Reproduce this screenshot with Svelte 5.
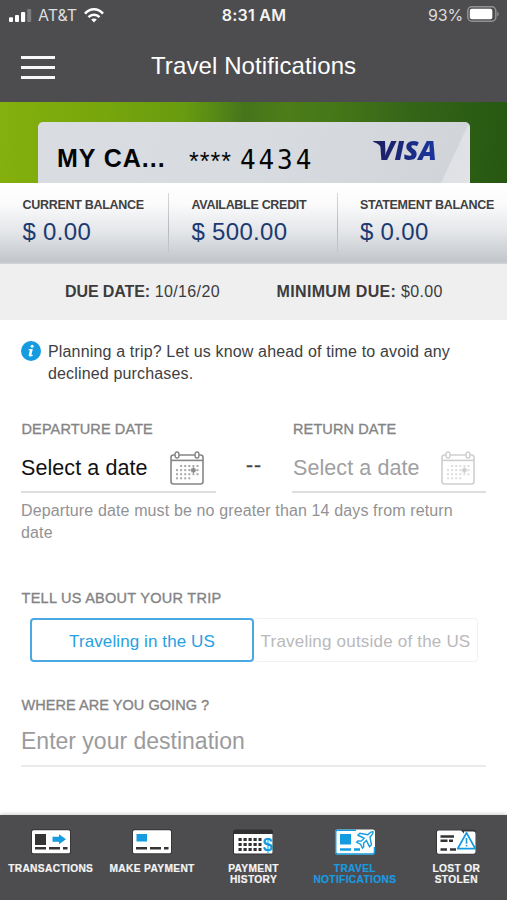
<script>
  const balances = [
    { label: 'CURRENT BALANCE', value: '$ 0.00' },
    { label: 'AVAILABLE CREDIT', value: '$ 500.00' },
    { label: 'STATEMENT BALANCE', value: '$ 0.00' }
  ];
  const tabs = [
    { id: 'transactions', lines: ['TRANSACTIONS'] },
    { id: 'pay', lines: ['MAKE PAYMENT'] },
    { id: 'history', lines: ['PAYMENT', 'HISTORY'] },
    { id: 'travel', lines: ['TRAVEL', 'NOTIFICATIONS'], active: true },
    { id: 'lost', lines: ['LOST OR', 'STOLEN'] }
  ];
  const dots = [];
  for (let r = 0; r < 4; r++)
    for (let c = 0; c < 6; c++)
      if (!(r === 0 && c < 1) && !(r === 3 && c > 3)) dots.push([6 + c * 4.1, 14 + r * 4.1]);
</script>

{#snippet calendar()}
  <svg class="cal" width="34" height="34" viewBox="0 0 34 34" fill="none" stroke="currentColor">
    <rect x="1" y="4" width="32" height="29" rx="2.5" stroke-width="1.6" />
    <path d="M1 9.4H33" stroke-width="1.6" />
    <rect x="5.1" y="1" width="3.8" height="6" rx="1.9" fill="#fff" stroke-width="1.4" />
    <rect x="25.1" y="1" width="3.8" height="6" rx="1.9" fill="#fff" stroke-width="1.4" />
    {#each dots as [x, y]}
      <rect {x} {y} width="2" height="2" fill="currentColor" stroke="none" opacity=".7" />
    {/each}
    <path d="M23.4 16.3v5.800M20.500 19.200h5.800M21.900 17.700h3v3h-3z" stroke-width="1.100" />
  </svg>
{/snippet}

<div class="app">
  <div class="status">
    <div class="side">
      <svg width="23" height="13" viewBox="0 0 23 13" fill="#fff">
        <rect x="0" y="8.2" width="4" height="4.8" rx="1" />
        <rect x="6" y="6" width="4" height="7" rx="1" />
        <rect x="12" y="3" width="4.2" height="10" rx="1" />
        <rect x="18.2" y="0" width="4" height="13" rx="1" opacity=".27" />
      </svg>
      <span class="carrier">AT&amp;T</span>
      <svg class="wifi" width="20" height="15" viewBox="0 0 20 15" fill="none" stroke="#fff" stroke-width="2.5">
        <path d="M1 5.6C6-.1 14-.1 19 5.6" />
        <path d="M4.5 9.2c3-3.3 8-3.3 11 0" />
        <path d="M10 14.5 7.2 11.6c1.5-1.5 4.1-1.5 5.6 0z" fill="#fff" stroke="none" />
      </svg>
    </div>
    <div class="clock">8:31 AM</div>
    <div class="side right">
      <span class="pct">93%</span>
      <svg width="32" height="16" viewBox="0 0 32 16">
        <rect x=".8" y=".8" width="28" height="14.4" rx="4" fill="none" stroke="#929294" stroke-width="1.5" />
        <rect x="2.8" y="2.8" width="22.5" height="10.4" rx="2" fill="#fff" />
        <path d="M30.3 5.5c1.8.8 1.8 4.2 0 5z" fill="#929294" />
      </svg>
    </div>
  </div>

  <header>
    <div class="burger"><i></i><i></i><i></i></div>
    <h1>Travel Notifications</h1>
  </header>

  <section class="band">
    <div class="card">
      <b>MY CA...</b>
      <span class="stars">****</span>
      <span class="digits">4434</span>
      <div class="logo">
        <svg width="9" height="8" viewBox="0 0 9 8"><path d="M.3 0H6.500Q8.500 0 9 2V8Q6.500 2.500.3 1z" fill="#1d2069" /></svg>
        <span class="visa">VISA</span>
      </div>
    </div>
  </section>

  <section class="balances">
    {#each balances as b}
      <div class="bal">
        <div class="cap">{b.label}</div>
        <div class="amt">{b.value}</div>
      </div>
    {/each}
  </section>

  <section class="due">
    <div><b>DUE DATE:</b> 10/16/20</div>
    <div class="min"><b>MINIMUM DUE:</b> $0.00</div>
  </section>

  <main>
    <div class="info">
      <svg width="20" height="20" viewBox="0 0 20 20">
        <circle cx="10" cy="10" r="10" fill="#149be0" />
        <circle cx="11.1" cy="5.3" r="1.5" fill="#fff" />
        <path d="M7.8 8h4l-1.3 5.5c-.1.6.3.7 1.3.2v1.1c-2.5 1.3-4.5.8-4-1.3L8.900 9.200H7.600z" fill="#fff" />
      </svg>
      <p>Planning a trip? Let us know ahead of time to avoid any<br />declined purchases.</p>
    </div>

    <div class="dates">
      <div class="field">
        <div class="label">DEPARTURE DATE</div>
        <div class="pick"><span>Select a date</span>{@render calendar()}</div>
      </div>
      <div class="dash">--</div>
      <div class="field off">
        <div class="label">RETURN DATE</div>
        <div class="pick"><span>Select a date</span>{@render calendar()}</div>
      </div>
    </div>
    <p class="hint">Departure date must be no greater than 14 days from return<br />date</p>

    <div class="label tell">TELL US ABOUT YOUR TRIP</div>
    <div class="seg">
      <div class="opt on">Traveling in the US</div>
      <div class="opt two">Traveling outside of the US</div>
    </div>

    <div class="label where">WHERE ARE YOU GOING ?</div>
    <div class="dest">Enter your destination</div>
  </main>

  <nav>
    {#each tabs as t}
      <div class="tab" class:active={t.active}>
        <svg width="42" height="26" viewBox="0 0 42 26">
          {#if t.id === 'transactions' || t.id === 'pay'}
            <rect x="1" y=".3" width="40" height="25" rx="2.500" fill="#363638" />
            <rect x="2" y="1.300" width="38" height="23" rx="1.500" fill="#fff" />
            {#if t.id === 'transactions'}
              <rect x="5" y="5" width="11" height="11" fill="#343435" />
              <path d="M22.500 7.700h6.500V5.300l7 5-7 5v-2.600h-6.500z" fill="#149be0" />
            {:else}
              <rect x="5.500" y="5" width="10.500" height="7.500" fill="#149be0" />
            {/if}
            <path d="M5 19.300H16M19 19.300H30M33 19.300h4.500" stroke="#343435" stroke-width="2.600" />
          {:else if t.id === 'history'}
            <rect x="1" y=".5" width="40" height="25" rx="2.500" fill="#303032" />
            <path d="M2 5H40.500v18.500q0 1-1 1H3q-1 0-1-1z" fill="#fff" />
            <path d="M6.500 10.500h23M6.500 15.500h23M6.500 20.500h23" stroke="#303032" stroke-width="3.200" stroke-dasharray="3.200 1.800" />
            <text x="35.700" y="21.500" text-anchor="middle" class="dollar">$</text>
          {:else if t.id === 'travel'}
            <rect x="1" y=".500" width="40" height="25" rx="2.500" fill="#fff" />
            <path d="M22 1.200H3.500Q1.700 1.200 1.700 3V23Q1.700 24.900 3.500 24.900H38.500Q40.500 24.900 40.500 23V18" fill="none" stroke="#149be0" stroke-width="1.500" />
            <path d="M6 5H17V15.500H6z" fill="#149be0" />
            <path d="M6 20.500h11M20 20.500h6" stroke="#149be0" stroke-width="2.400" />
            <g transform="translate(32.300 9.400) rotate(45) scale(.91)">
              <path d="M0-10.500C1.500-9.500 1.700-8 1.700-4L9 1V4L1.700 1.500V6L4.500 8.500V10.500L0 9-4.500 10.500V8.500L-1.700 6V1.500L-9 4V1L-1.700-4C-1.700-8-1.500-9.500 0-10.500Z" fill="#fff" stroke="#149be0" stroke-width="1.500" />
            </g>
          {:else}
            <rect x="1" y=".800" width="40" height="24.500" rx="2.500" fill="#363638" />
            <path d="M3.500 1.500H26L29 4.500V2.500H38.500Q40.500 2.500 40.500 4.500V23Q40.500 24.800 38.500 24.800H3.500Q2 24.800 2 23V3Q2 1.500 3.500 1.500z" fill="#fff" />
            <path d="M5.500 7.500H19M5.500 11.800h7M14 11.800h4M5.500 20.500h6.500M15 20.500h6" stroke="#343435" stroke-width="2.600" />
            <path d="M31.500 3.900 40.300 19.600H22.700Z" fill="#fff" stroke="#149be0" stroke-width="1.800" stroke-linejoin="round" />
            <path d="M31.500 9v5.700M31.500 15.900v1.700" stroke="#149be0" stroke-width="1.600" />
          {/if}
        </svg>
        <div class="names">
          {#each t.lines as l}<div>{l}</div>{/each}
        </div>
      </div>
    {/each}
  </nav>
</div>

<style>
  :global(body) { margin: 0; background: #fff; }
  .app {
    width: 507px; height: 900px; overflow: hidden;
    display: flex; flex-direction: column;
    font-family: "Liberation Sans", Arial, sans-serif; background: #fff;
    white-space: nowrap; color: #333;
  }
  * { box-sizing: border-box; }
  h1, p { margin: 0; font-weight: 400; }
  .status {
    height: 30px; flex: none; background: #4d4d4f; color: #f4f4f4;
    display: grid; grid-template-columns: 1fr auto 1fr; align-items: center;
    padding: 0 8px 0 9px; font-family: Inter, sans-serif;
  }
  .side { display: flex; align-items: center; height: 30px; }
  .right { justify-content: flex-end; }
  .right svg { margin-top: -2px; }
  .carrier { font-size: 16px; margin-left: 6px; letter-spacing: 0; color: #dedede; }
  .wifi { margin-left: 7px; }
  .clock { font-size: 16px; font-weight: 600; letter-spacing: .25px; }
  .pct { font-size: 16px; letter-spacing: -.2px; margin-right: 4px; color: #dedede; }
  header {
    height: 72px; flex: none; background: #4d4d4f; color: #fff;
    display: flex; align-items: center; padding: 1px 0 0 21px;
  }
  .burger { width: 34px; display: flex; flex-direction: column; gap: 7px; margin-top: 2px; }
  .burger i { height: 3px; background: #f7f7f7; }
  h1 { font-size: 24px; line-height: 30px; margin: 0 0 1px 96px; letter-spacing: .1px; }
  .band {
    height: 81px; flex: none; padding: 20px 37px 0 38px;
    background: linear-gradient(93deg, #85b00d 0, #77a60c 20%, #689b10 36%, #578a15 42%, #46741c 48%, #4d7c18 56%, #457718 66%, #356518 80%, #265812 100%);
  }
  .card {
    height: 61px; border-radius: 5px 5px 0 0; color: #050505;
    background: linear-gradient(115deg, #d9dce0 0, #d8dbdf 50%, #d1d5d9 93.500%, #dfe1e5 93.900%, #e1e3e6 100%);
    display: flex; align-items: center; padding: 11px 0 0 19px;
  }
  .card b { font-size: 25px; letter-spacing: .95px; width: 132px; }
  .stars { font-size: 25px; letter-spacing: 1px; width: 51px; padding-top: 6px; }
  .digits { font-family: "DejaVu Sans Mono", monospace; font-size: 26px; letter-spacing: 2.900px; width: 133px; padding-top: 4px; }
  .logo { display: flex; align-items: flex-start; margin-top: -16px; }
  .logo svg { margin: 5px -4px 0 0; }
  .visa {
    font: italic 800 27px/28px "Open Sans", sans-serif; letter-spacing: -.2px; padding-right: 3px;
    background: linear-gradient(90deg, #1c1f66, #1a37a0); -webkit-background-clip: text; background-clip: text; color: transparent;
  }
  .balances {
    height: 81px; flex: none; display: grid; grid-template-columns: 169px 168.500px 1fr;
    background: linear-gradient(#fff 0, #fbfbfc 25%, #e4e6e9 60%, #c2c6ca 97%, #d4d6d8 100%);
  }
  .bal { padding: 15px 0 0 22.500px; position: relative; }
  .bal + .bal::before {
    content: ""; position: absolute; left: -1px; top: 10px; width: 1px; height: 59px;
    background: linear-gradient(#d7d9db, #b8bbbe 60%, #c3c7ca);
  }
  .cap { font-size: 12.500px; line-height: 15px; font-weight: 700; color: #404042; letter-spacing: -.3px; }
  .amt { font-size: 24px; line-height: 28px; margin-top: 5px; color: #1b3a72; letter-spacing: .3px; }
  .due {
    height: 56px; flex: none; background: #efefef; display: flex; align-items: center;
    padding-left: 65px; font-size: 16px; color: #3c3c3e; letter-spacing: .35px;
  }
  .due b { letter-spacing: -.1px; }
  .due .min b { letter-spacing: .35px; }
  .due div:first-child { width: 211.500px; }
  main { flex: 1; padding: 21px 21px 0; }
  .info { display: flex; color: #404042; }
  .info svg { flex: none; }
  .info p { font-size: 16px; line-height: 22px; margin-left: 7px; letter-spacing: .16px; }
  .dates { display: flex; margin-top: 33px; height: 75px; }
  .field { width: 195px; border-bottom: 2px solid #dedede; }
  .off { width: 194px; }
  .label { font-size: 14.500px; line-height: 22px; padding-left: .5px; color: #848486; -webkit-text-stroke: .35px currentColor; letter-spacing: .12px; }
  .pick { display: flex; align-items: center; height: 56px; font-size: 21.500px; letter-spacing: .08px; color: #111; }
  .pick span { width: 149px; }
  .pick .cal { color: #858587; }
  .off .label { padding-left: 1px; }
  .off .pick { color: #a0a0a2; }
  .off .pick span { padding-left: 1px; }
  .off .cal { color: #cfcfd1; }
  .dash { width: 76px; text-align: center; padding-top: 32px; font-size: 21px; line-height: 30px; color: #444; letter-spacing: 1px; -webkit-text-stroke: .4px currentColor; }
  .hint { font-size: 16px; line-height: 22px; margin-top: 7px; color: #929294; letter-spacing: .13px; }
  .tell { margin-top: 43px; letter-spacing: .27px; }
  .seg { display: flex; margin: 9px 0 0 9px; height: 45px; }
  .opt {
    font-size: 17px; border: 2px solid #4aa9e3; border-radius: 4px; height: 44px; width: 224px; padding-top: 3px;
    display: flex; align-items: center; justify-content: center; color: #27a0e2; letter-spacing: .1px;
  }
  .two { color: #b9b9bb; border: 1px solid #f2f2f2; border-left: 0; letter-spacing: .2px; }
  .where { margin-top: 31px; letter-spacing: .05px; }
  .dest { font-size: 23px; height: 51px; line-height: 51px; color: #9b9b9d; border-bottom: 2px solid #ebebeb; }
  nav {
    height: 85px; flex: none; background: #4d4d4f; display: grid; grid-template-columns: repeat(5, 1fr);
    padding-top: 14px; box-shadow: 0 -1px 4px #0003;
  }
  .tab { display: flex; flex-direction: column; align-items: center; color: #f4f4f4; }
  .names { font-size: 10.200px; font-weight: 700; line-height: 11px; margin-top: 8px; text-align: center; letter-spacing: .35px; -webkit-text-stroke: .2px currentColor; }
  .active { color: #189be0; }
  .dollar { font: 700 18px "Liberation Sans", sans-serif; fill: #149be0; }
</style>
